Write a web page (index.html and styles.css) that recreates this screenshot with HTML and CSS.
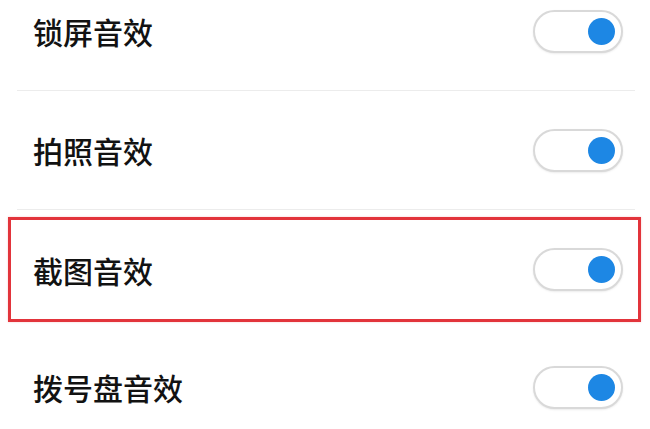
FILE: index.html
```html
<!DOCTYPE html>
<html lang="zh-CN">
<head>
<meta charset="utf-8">
<title>音效设置</title>
<link rel="stylesheet" href="styles.css">
</head>
<body>
<div class="list">
  <div class="row divided">
    <span class="label">锁屏音效</span>
    <span class="switch"><span class="knob"></span></span>
  </div>
  <div class="row divided">
    <span class="label">拍照音效</span>
    <span class="switch"><span class="knob"></span></span>
  </div>
  <div class="row highlight">
    <span class="label">截图音效</span>
    <span class="switch"><span class="knob"></span></span>
  </div>
  <div class="row">
    <span class="label">拨号盘音效</span>
    <span class="switch"><span class="knob"></span></span>
  </div>
</div>
</body>
</html>
```

FILE: styles.css
```css
html, body {
  margin: 0;
  padding: 0;
  background: #ffffff;
  overflow: hidden;
}
body {
  width: 650px;
  height: 429px;
  font-family: "Noto Sans CJK SC", "Noto Sans", sans-serif;
}
.list {
  margin-top: -28px;
  padding: 0 15px 0 17px;
}
.row {
  box-sizing: border-box;
  height: 118px;
  display: flex;
  align-items: center;
  justify-content: space-between;
  padding: 0 12px 0 16px;
}
.row.divided {
  height: 119px;
  border-bottom: 1px solid #ececec;
}
.row.highlight {
  height: 105px;
  margin: 7px -6px 6px -9px;
  border: 3px solid #e2343b;
  padding: 0 15px 0 22px;
  box-shadow: 0 0 2px rgba(226, 52, 59, 0.25);
}
.label {
  font-size: 30px;
  font-weight: 500;
  color: #121212;
  letter-spacing: 0;
  line-height: 1;
}
.switch {
  box-sizing: border-box;
  width: 90px;
  height: 43px;
  border: 2px solid #d9d9d9;
  border-radius: 22px;
  background: #ffffff;
  display: flex;
  align-items: center;
  justify-content: flex-end;
  padding-right: 6px;
  box-shadow: 0 1px 2px rgba(0, 0, 0, 0.08);
}
.knob {
  width: 27px;
  height: 27px;
  border-radius: 50%;
  background: #1d87e4;
}
```
